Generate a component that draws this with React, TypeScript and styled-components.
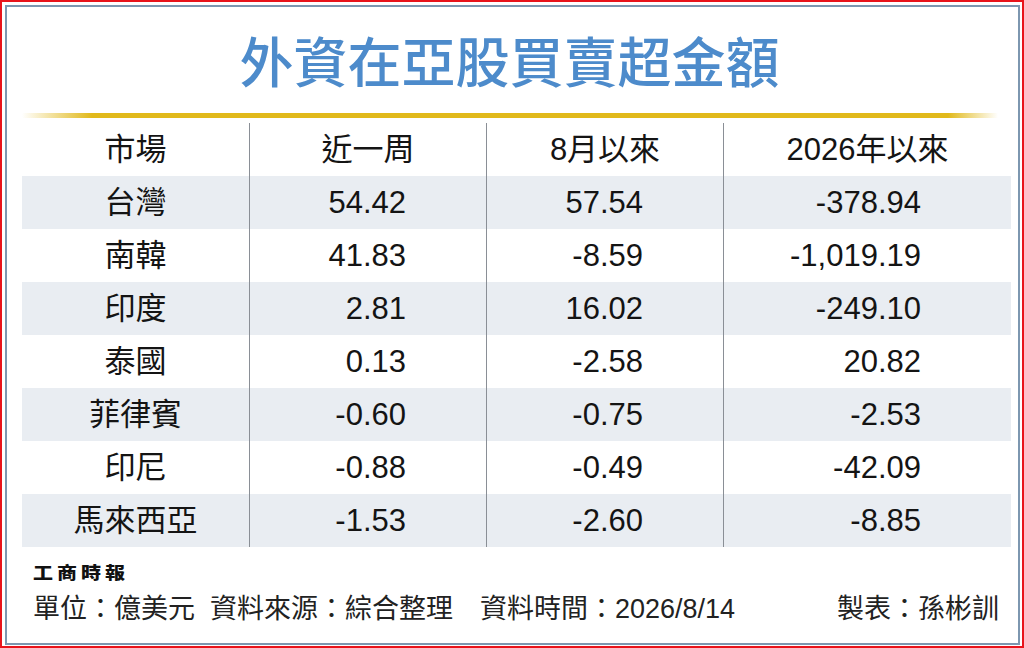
import styled, { createGlobalStyle } from "styled-components";

type Row = {
  market: string;
  week: string;
  month: string;
  year: string;
};

const rows: Row[] = [
  { market: "台灣", week: "54.42", month: "57.54", year: "-378.94" },
  { market: "南韓", week: "41.83", month: "-8.59", year: "-1,019.19" },
  { market: "印度", week: "2.81", month: "16.02", year: "-249.10" },
  { market: "泰國", week: "0.13", month: "-2.58", year: "20.82" },
  { market: "菲律賓", week: "-0.60", month: "-0.75", year: "-2.53" },
  { market: "印尼", week: "-0.88", month: "-0.49", year: "-42.09" },
  { market: "馬來西亞", week: "-1.53", month: "-2.60", year: "-8.85" },
];

const FONT = `"Liberation Sans", "Noto Sans CJK TC", sans-serif`;

const GlobalStyle = createGlobalStyle`
  html, body {
    margin: 0;
    padding: 0;
    background: #ffffff;
  }
  body {
    font-family: ${FONT};
  }
`;

// ===== layout =====

const Page = styled.div`
  box-sizing: border-box;
  width: 1024px;
  height: 648px;
  border: 2px solid #e8141b;
  padding: 3px 2px 1px 3px;
  background: #ffffff;
`;

const Frame = styled.div`
  box-sizing: border-box;
  height: 100%;
  border: 2px solid #7d97b0;
  padding-top: 26px;
  display: flex;
  flex-direction: column;
`;

const Title = styled.h1`
  margin: 0;
  text-align: center;
  font-family: "Noto Sans CJK TC", sans-serif;
  font-size: 54px;
  line-height: 1;
  font-weight: 500;
  color: #4d8bcb;
  padding-right: 6px;
`;

const GoldRule = styled.div`
  height: 5px;
  margin: 26px 20px 0 15px;
  background: linear-gradient(
    to right,
    rgba(226, 186, 28, 0) 0,
    #e1b91b 70px,
    #e1b91b calc(100% - 50px),
    rgba(226, 186, 28, 0) 100%
  );
`;

// ===== table =====

const Table = styled.div`
  margin: 5px 7px 0 15px;
  display: grid;
  grid-template-columns: 227px 237px 237px 1fr;
`;

const Cell = styled.div<{ $shaded?: boolean; $divider?: boolean; $align?: "center" | "right"; $padRight?: number }>`
  height: 53px;
  display: flex;
  align-items: center;
  justify-content: ${({ $align }) => ($align === "right" ? "flex-end" : "center")};
  padding-right: ${({ $padRight }) => $padRight ?? 0}px;
  background: ${({ $shaded }) => ($shaded ? "#e9edf2" : "#ffffff")};
  border-left: ${({ $divider }) => ($divider ? "1px solid #8a8f96" : "none")};
  font-size: 31px;
  line-height: 1;
  color: #141414;
  white-space: nowrap;
`;

// ===== footer =====

const Footer = styled.div`
  margin-top: 15px;
  padding: 0 19px 0 26px;
  display: flex;
  flex-direction: column;
`;

const Logo = styled.div`
  font-family: "Noto Sans CJK TC", serif;
  font-size: 20px;
  line-height: 1;
  font-weight: 900;
  letter-spacing: 4px;
  color: #111111;
  transform: scaleY(0.85);
  transform-origin: left center;
`;

const Meta = styled.div`
  margin-top: 14px;
  display: flex;
  justify-content: space-between;
  font-size: 27px;
  line-height: 1;
  color: #222222;
  white-space: pre;
`;

const numberPad = [0, 80, 80, 90];

export default function App() {
  return (
    <>
      <GlobalStyle />
      <Page>
        <Frame>
          <Title>外資在亞股買賣超金額</Title>
          <GoldRule />

          <Table>
            <Cell>市場</Cell>
            <Cell $divider>近一周</Cell>
            <Cell $divider>8月以來</Cell>
            <Cell $divider>2026年以來</Cell>

            {rows.map((row, i) => {
              const shaded = i % 2 === 0;
              return [
                <Cell key={`${row.market}-m`} $shaded={shaded}>
                  {row.market}
                </Cell>,
                ...[row.week, row.month, row.year].map((v, j) => (
                  <Cell
                    key={`${row.market}-${j}`}
                    $shaded={shaded}
                    $divider
                    $align="right"
                    $padRight={numberPad[j + 1]}
                  >
                    {v}
                  </Cell>
                )),
              ];
            })}
          </Table>

          <Footer>
            <Logo>工商時報</Logo>
            <Meta>
              <span>{"單位：億美元  資料來源：綜合整理　資料時間：2026/8/14"}</span>
              <span>製表：孫彬訓</span>
            </Meta>
          </Footer>
        </Frame>
      </Page>
    </>
  );
}
